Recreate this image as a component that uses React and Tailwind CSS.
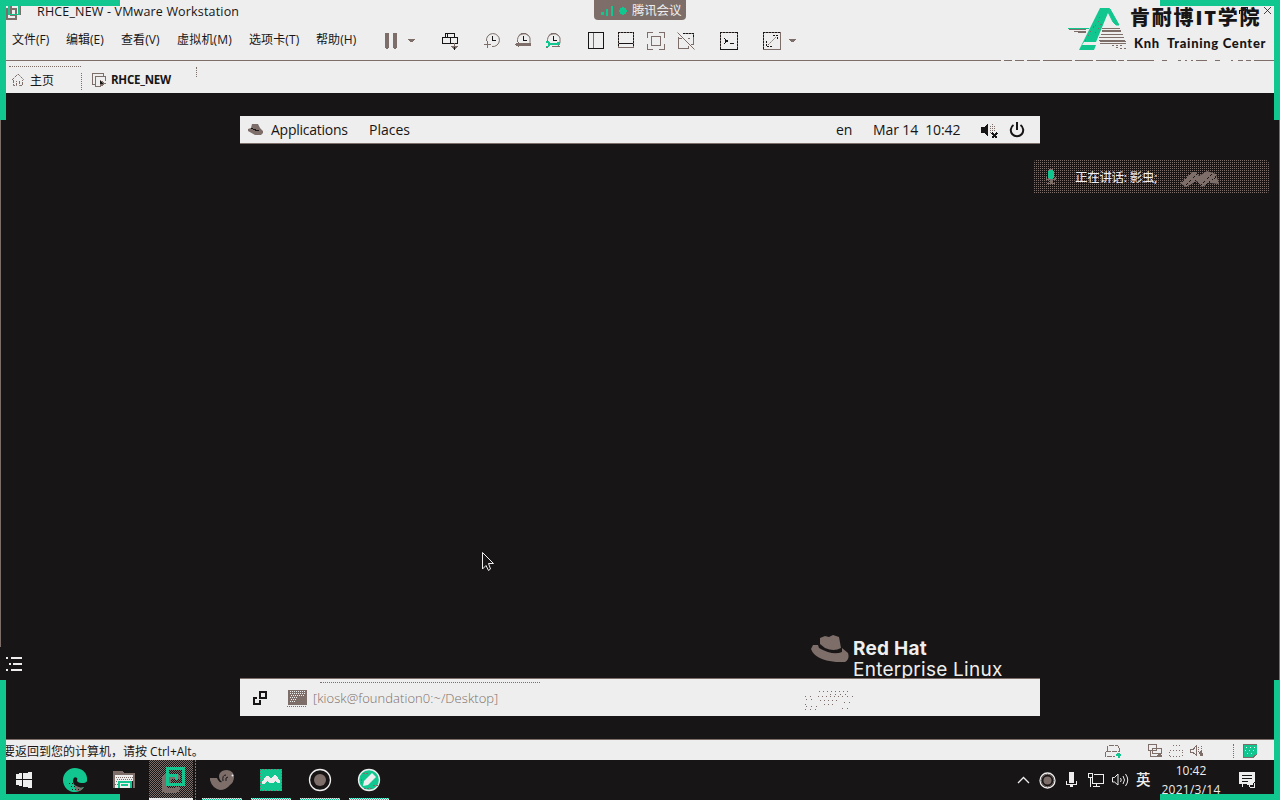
import React from 'react';

const INK = '#171515';
const TAUPE = '#7d6e6a';
const GREEN = '#11c78f';
const PAPER = '#eeeeee';

function Pic({ w, h, className = '', children }) {
  return (
    <svg
      width={w}
      height={h}
      viewBox={`0 0 ${w} ${h}`}
      fill="none"
      shapeRendering="crispEdges"
      className={`block shrink-0 ${className}`}
    >
      {children}
    </svg>
  );
}

function Clock({ children }) {
  return (
    <Pic w={17} h={18} className="mt-2">
      <g shapeRendering="auto">
        <path d="M2.500 10V7.500A6.500 6.500 0 0 1 15 6v4.500A7 7 0 0 1 13 14" stroke={TAUPE} />
        <path d="M4 3.500L6 1.500H11L13.500 4" stroke={TAUPE} />
      </g>
      <path d="M8.500 4V8.500H12" stroke={INK} />
      {children}
    </Pic>
  );
}

function Caret() {
  return (
    <Pic w={7} h={4} className="mt-[15px]">
      <path d="M0 0H7V1H6V2H5V3H2V2H1V1H0Z" fill={TAUPE} />
    </Pic>
  );
}

function MenuBar() {
  return (
    <div className="flex h-9 shrink-0 items-start pl-1.5 text-[12px] leading-8">
      <div className="w-1.5" />
      <span className="w-[54px] whitespace-nowrap">文件(F)</span>
      <span className="w-[55px] whitespace-nowrap">编辑(E)</span>
      <span className="w-[56px] tracking-[0.100px] whitespace-nowrap">查看(V)</span>
      <span className="w-[72px] tracking-[0.200px] whitespace-nowrap">虚拟机(M)</span>
      <span className="w-[67px] tracking-[0.100px] whitespace-nowrap">选项卡(T)</span>
      <span className="w-[69px] tracking-[0.100px] whitespace-nowrap">帮助(H)</span>
      <div className="flex w-[57px] gap-[11px]">
        <Pic w={12} h={16} className="mt-[9px]">
          <path d="M0 0H4V15H3V16H1V15H0ZM8 0H12V15H11V16H9V15H8Z" fill={TAUPE} />
        </Pic>
        <Caret />
      </div>
      <div className="w-[42px]">
        <Pic w={18} h={19} className="mt-2">
          <path d="M3.500 5V1.500H12.500V5M.5 5.500H8.500V11.500H.5ZM8.500 5.500H15.500V11.500H8.500M5.500 5V2M10 5.500H3" stroke={INK} />
          <path d="M12.500 11V17M9 14.500H16M10 15.500H15M11 16.500H14" stroke={TAUPE} />
          <path d="M12 15H13V18H12Z" fill={INK} />
        </Pic>
      </div>
      <div className="w-[31px]">
        <Pic w={17} h={18} className="mt-2">
          <g shapeRendering="auto">
            <path d="M2.500 9A6.500 6.500 0 1 1 8 14.500" stroke={TAUPE} />
          </g>
          <path d="M8.500 4V8.500H12" stroke={INK} />
          <path d="M0 12.500H7M3.500 9V16" stroke={TAUPE} />
        </Pic>
      </div>
      <div className="w-[30px]">
        <Clock>
          <path d="M0 12H1V11H3V10H4V11H16V14H4V15H3V14H1V13H0Z" fill={TAUPE} />
        </Clock>
      </div>
      <div className="w-[43px]">
        <Clock>
          <path d="M1 9H4V10H5V11H12V10H15V13H5V14H4V15H1V14H3V11H1Z" fill={GREEN} />
          <path d="M7 14.500H15M1 15.500H3" stroke={TAUPE} />
        </Clock>
      </div>
      <div className="w-[30px]">
        <Pic w={17} h={17} className="mt-2">
          <path d="M.5 .5H15.500V16.500H.5Z" stroke={INK} />
          <path d="M5.500 1V16" stroke={TAUPE} />
        </Pic>
      </div>
      <div className="w-[29px]">
        <Pic w={17} h={17} className="mt-2">
          <path d="M.5 .5H15.500V15.500H.5Z" stroke={TAUPE} />
          <path d="M0 .5H16M.5 0V15M15.500 0V15" stroke={INK} strokeDasharray="2 1" />
          <path d="M1 11.500H15" stroke={INK} />
        </Pic>
      </div>
      <div className="w-[30px]">
        <Pic w={18} h={18} className="mt-2">
          <path d="M.5 6V.5H6M12 .5H17.500V6M17.500 12V17.500H12M6 17.500H.5V12M4.500 4.500H13.500V13.500H4.500Z" stroke={TAUPE} />
        </Pic>
      </div>
      <div className="w-[43px]">
        <Pic w={18} h={18} className="mt-2">
          <path d="M6 1.500H16.500V12.500H14M1.500 5V16.500H11.500M1.500 6.500H5M11.500 14V16M11 6.500H13" stroke={TAUPE} />
          <path d="M6 1.500H16.500V6" stroke={INK} strokeDasharray="2 1" />
          <path d="M.5 .5L17.500 17.500" stroke={TAUPE} shapeRendering="auto" />
        </Pic>
      </div>
      <div className="w-[43px]">
        <Pic w={18} h={18} className="mt-2">
          <path d="M.5 .5H17.500V17.500H.5Z" stroke={TAUPE} />
          <path d="M0 .5H18M.5 0V18M17.500 0V18" stroke={INK} strokeDasharray="2 1" />
          <path d="M10 11.500H14M0 17.500H18" stroke={INK} />
          <path d="M4 6H5V7H6V8H8V10H6V11H5V12H4V11H5V7H4Z" fill={INK} />
        </Pic>
      </div>
      <div className="flex gap-2">
        <Pic w={18} h={18} className="mt-2">
          <path d="M.5 .5H17.500V17.500H.5Z" stroke={TAUPE} />
          <path d="M0 .5H18M.5 0V18" stroke={INK} strokeDasharray="2 1" />
          <path d="M10 3.500H14.500V8M3.500 9V14.500H9" stroke={INK} strokeDasharray="2 1" />
          <path d="M5 13L13 5" stroke={TAUPE} strokeDasharray="2 1" shapeRendering="auto" />
        </Pic>
        <Caret />
      </div>
    </div>
  );
}

function SchoolLogo() {
  return (
    <div className="absolute top-1.5 left-[1068px] flex">
      <Pic w={60} h={46}>
        <path d="M11 44L32 2H42L28 36H16L14 39H28L26 44Z" fill={GREEN} shapeRendering="auto" />
        <path d="M42 3L51 19H48L45 16L40 6Z" fill={GREEN} stroke={GREEN} strokeLinejoin="round" shapeRendering="auto" />
        <path d="M31 12L35 8M27 20L32 13M20 30L27 19M27 27L34 17M17 35L24 28" stroke={TAUPE} strokeDasharray="1 4" />
        <path d="M0 22.500H21" stroke={GREEN} />
        <path d="M1 23.500H18M6 25.500H18M10 26.500H18" stroke={TAUPE} />
        <path d="M34 22.500H52M34 24.500H53M34 25.500H53M33 28.500H55M31 31.500H56M31 34.500H57M32 35.500H58M32 37.500H58" stroke={TAUPE} />
        <path d="M44 39.500H54M48 41.500H52M52 42.500H58" stroke={TAUPE} strokeDasharray="2 2" />
      </Pic>
      <div className="ml-0.5 whitespace-nowrap">
        <div className="h-[26px] text-[20px] leading-[24px] font-black tracking-[1.800px]">肯耐博IT学院</div>
        <div className="ml-1 h-[20px] font-['Lato','Liberation_Sans',sans-serif] text-[13px] leading-[22px] font-black tracking-[0.680px]">Knh&nbsp; Training Center</div>
      </div>
    </div>
  );
}

function Header() {
  return (
    <header className="relative mr-1.5 flex h-[93px] shrink-0 flex-col bg-[#eeeeee]">
      <div className="flex h-6 shrink-0">
        <div className="w-[37px] pt-1 pl-[5px]">
          <Pic w={17} h={17}>
            <path d="M2 5H11V15H2ZM6 2V11H10" stroke={TAUPE} strokeWidth="2" />
            <path d="M4 2V10.500H14V2" stroke={GREEN} strokeWidth="1.500" />
            <path d="M15.500 2V11" stroke={TAUPE} />
          </Pic>
        </div>
        <span className="w-[557px] text-[12.500px] leading-6 tracking-[0.170px] whitespace-nowrap">RHCE_NEW - VMware Workstation</span>
        <div className="flex h-5 w-[92px] rounded-b bg-[#7d6e6a] pl-1.5 text-[#eeeeee]">
          <Pic w={14} h={12} className="mt-[5px]">
            <path d="M1 7H4V10H1ZM6 4H8V11H6ZM11 1H13V11H11Z" fill={GREEN} />
          </Pic>
          <Pic w={10} h={10} className="mt-1.5 ml-1">
            <path d="M2 2H8V8H2ZM4 1H6V9H4ZM1 4H9V6H1Z" fill={GREEN} />
          </Pic>
          <span className="ml-1 text-[12.500px] leading-[21px] tracking-[-0.200px] whitespace-nowrap">腾讯会议</span>
        </div>
      </div>
      <MenuBar />
      <div className="flex h-px shrink-0">
        <div className="w-[1001px] bg-[#7d6e6a]" />
        <Pic w={273} h={1}>
          <path
            d="M3 .5H11M14 .5H23M26 .5H39M42 .5H71M74 .5H92M95 .5H115M117 .5H123M126 .5H153M161 .5H166M177 .5H180M184 .5H186M190 .5H192M195 .5H206M214 .5H219M230 .5H232M237 .5H242M245 .5H250M253 .5H273"
            stroke={TAUPE}
          />
        </Pic>
      </div>
      <div className="flex h-8">
        <div className="mt-[5px] ml-[9px] flex h-[27px] w-[72px] border-t border-dotted border-[#7d6e6a] pl-[3px]">
          <Pic w={12} h={14} className="mt-[6px]">
            <path d="M0 7L6 1L12 7M1.500 7V12.500H4.500V8M7.500 8V12.500H10.500V7" stroke={TAUPE} strokeDasharray="3 1" shapeRendering="auto" />
          </Pic>
          <span className="ml-[6px] text-[12px] leading-[27px] whitespace-nowrap">主页</span>
        </div>
        <div className="mt-3 h-[17px] border-l border-dotted border-[#7d6e6a]" />
        <Pic w={15} h={15} className="mt-3 ml-[10px]">
          <path d="M3 11.500H.5V.5H11.500V3M8 13.500H3.500V3.500H13.500V8" stroke={TAUPE} />
          <path d="M8 7L14 10.500L8 14Z" fill={TAUPE} />
          <path d="M8 8L11 10.500L8 11Z" fill={INK} />
        </Pic>
        <span className="ml-1 w-[85px] text-[11.500px] leading-[38px] font-bold tracking-[-0.250px] whitespace-nowrap">RHCE_NEW</span>
        <div className="mt-1.5 h-[10px] border-l border-dotted border-[#7d6e6a]" />
      </div>
      <SchoolLogo />
      <Pic w={10} h={8} className="absolute top-1.5 left-[1239px]">
        <path d="M0 7.500V4.500H5M2 5V1.500H8V7" stroke={INK} />
      </Pic>
      <Pic w={9} h={9} className="absolute top-1.5 left-[1263px]">
        <path d="M1 1L8 8M8 1L1 8" stroke={INK} strokeWidth="0.800" shapeRendering="auto" />
      </Pic>
    </header>
  );
}

function GuestDesktop() {
  return (
    <div className="mx-auto mt-[23px] flex h-[600px] w-[800px] flex-col">
      <div className="flex h-7 shrink-0 items-start border-b border-[#7d6e6a] bg-[#eeeeee] font-['Open_Sans','Noto_Sans',sans-serif] text-[14px] leading-7">
        <Pic w={16} h={12} className="mt-[8px] ml-2">
          <path d="M4 0H10L12 4L15 7V9L13 11H7L0 7V5L3 4Z" fill={TAUPE} shapeRendering="auto" />
          <path d="M3 4.500H5M5 5.500H8M7 6.500H11" stroke={INK} />
        </Pic>
        <span className="ml-[7px] w-[98px] tracking-[-0.250px]">Applications</span>
        <span className="w-[467px]">Places</span>
        <span className="w-[37px]">en</span>
        <span className="w-[107px] tracking-[-0.100px] whitespace-pre">Mar 14  10:42</span>
        <Pic w={18} h={16} className="mt-1.5">
          <path d="M1 5H4L8 1V15L4 11H1Z" fill={INK} />
          <path d="M10.500 4V12M12.500 2V11M14.500 4V10" stroke={TAUPE} strokeDasharray="1 1" />
          <path d="M12 11L17 16M17 11L12 16" stroke={INK} strokeWidth="2" />
        </Pic>
        <Pic w={16} h={16} className="mt-1.5 ml-[11px]">
          <g shapeRendering="auto">
            <path d="M4.500 3A6.200 6.200 0 1 0 11.500 3M8 0V8" stroke={INK} strokeWidth="2" />
          </g>
        </Pic>
      </div>
      <div className="flex-1" />
      <div className="flex h-[44px] shrink-0 items-start overflow-hidden pl-[571px] font-['Inter','Open_Sans',sans-serif] text-[#eeeeee]">
        <Pic w={38} h={29}>
          <g shapeRendering="auto">
            <path d="M9 4L14 2L18 3L22 1L28 3L30 14Q23 18 14 14L9 10Z" fill={TAUPE} />
            <path d="M7 11L2 11L0 15Q4 26 25 28H34Q39 25 37 19L31 14V18Q22 22 8 14Z" fill={TAUPE} />
          </g>
        </Pic>
        <div className="mt-1 ml-1 whitespace-nowrap">
          <div className="h-[22px] text-[19px] leading-[22px] font-bold tracking-[0.250px]">Red Hat</div>
          <div className="h-[22px] text-[19px] leading-[20px] tracking-[0.250px]">Enterprise Linux</div>
        </div>
      </div>
      <div className="flex h-[38px] shrink-0 border-t border-[#7d6e6a] bg-[#eeeeee]">
        <Pic w={15} h={14} className="mt-3 ml-[13px]">
          <path d="M7 1H13V7H7ZM1 10V7H4M4 12.500H1V7M7 9V13H3" stroke={INK} strokeWidth="2" />
        </Pic>
        <div className="mt-[3px] ml-[15px] flex w-[257px] pl-1">
          <Pic w={20} h={19} className="mt-[7px]">
            <path d="M1 1H20V16H1Z" fill={TAUPE} />
            <path d="M3 2.500H18M3 4.500H18M4 6.500H17M3 8.500H10M4 10.500H9M3 12.500H8" stroke={PAPER} strokeDasharray="1 1" />
            <path d="M0 17.500H19" stroke={TAUPE} strokeDasharray="1 1" />
          </Pic>
          <div className="relative ml-[13px] w-[220px] border-t border-dotted border-[#7d6e6a]">
            <div className="-ml-[7px] font-['Open_Sans','Noto_Sans',sans-serif] text-[13px] leading-[30px] font-light tracking-[0.050px] whitespace-nowrap text-[#7d6e6a]">[kiosk@foundation0:~/Desktop]</div>
          </div>
        </div>
        <Pic w={50} h={22} className="mt-3 ml-[264px]">
          <path d="M15 .5H47M14 5.500H40M16 9.500H34M20 13.500H30" stroke={TAUPE} strokeDasharray="1 3" />
          <path d="M1 5.500H8M2 8.500H12M26 3.500H44M38 5.500H50M40 11.500H48M1 13.500H4M2 15.500H14M1 18.500H13M38 17.500H48" stroke={TAUPE} strokeDasharray="1 4" />
        </Pic>
      </div>
    </div>
  );
}

function StatusBar() {
  return (
    <div className="mr-1.5 flex h-[21px] shrink-0 border-t border-[#7d6e6a] bg-[#eeeeee]">
      <span className="ml-[3px] w-[1101px] text-[12px] leading-[23px] whitespace-nowrap">要返回到您的计算机，请按 Ctrl+Alt。</span>
      <Pic w={17} h={15} className="mt-1 ml-px">
        <path d="M2.500 7V3L4 1.500H12.500L14.500 4V7M1 7.500H15M.5 8V12.500H10" stroke={TAUPE} strokeDasharray="5 1" />
        <path d="M12 9H15V10H16V12H15V14H13V12H11V10H12Z" fill={GREEN} />
      </Pic>
      <Pic w={16} h={15} className="mt-1 ml-[26px]">
        <path d="M.5 .5H8.500V6.500H.5ZM4.500 4.500H13.500V9.500H4.500ZM2.500 6V12.500H9" stroke={TAUPE} />
        <path d="M10 9H13V11H14V13H9V11H10Z" fill={TAUPE} />
      </Pic>
      <Pic w={15} h={13} className="mt-[5px] ml-[5px]">
        <path d="M4 .5H11M1 5.500H14M.5 7V12M13.500 7V12M1 11.500H13" stroke={TAUPE} strokeDasharray="1 2" />
      </Pic>
      <Pic w={15} h={14} className="mt-1 ml-[6px]">
        <path d="M.5 5.500H3L6.500 1.500V11.500L3 8.500H.5Z" stroke={TAUPE} />
        <path d="M8.500 3V9M11.500 2V8" stroke={TAUPE} strokeDasharray="1 1" />
        <path d="M10 7H12V9H13V12H10V10H9V8H10Z" fill={TAUPE} />
      </Pic>
      <div className="mt-1 ml-[28px] h-[14px] border-l border-dotted border-[#7d6e6a]" />
      <Pic w={15} h={14} className="mt-1 ml-[9px]">
        <path d="M0 0H14V10L10 13H0Z" fill={GREEN} />
        <path d="M0 .5H14M.5 0V13M0 13.500H10L14 10" stroke={TAUPE} />
        <path d="M3 3.500H12M2 6.500H12M4 9.500H11" stroke={PAPER} strokeDasharray="1 3" />
      </Pic>
    </div>
  );
}

function AppButton({ className = '', children }) {
  return (
    <div className={`flex h-10 w-10 shrink-0 flex-col items-center justify-between pt-2 ${className}`}>
      {children}
      <div className="h-0.5 w-10 bg-[conic-gradient(#11c78f_25%,#eeeeee_0_50%,#11c78f_0_75%,#eeeeee_0)] bg-size-[2px_2px]" />
    </div>
  );
}

function Taskbar() {
  return (
    <footer className="flex h-10 shrink-0 text-[#eeeeee]">
      <Pic w={17} h={17} className="mt-[12px] ml-4">
        <path d="M0 2L6 1V7H0ZM7 1L16 0V7H7ZM0 8H6V14L0 13ZM7 8H16V16L7 15Z" fill={PAPER} />
      </Pic>
      <Pic w={24} h={24} className="mt-2 ml-[30px]">
        <g shapeRendering="auto">
          <path d="M24 13C25 5 19 0 12 0C5 0 0 6 0 12C0 19 6 25 13 24C16 24 20 21 21 19C16 21 10 18 10 13C10 10 12 8 14 10C15 11 13 13 15 14C18 16 24 15 24 13Z" fill={GREEN} />
          <path d="M11 17L18 20L21 19L17 23L13 23Z" fill={TAUPE} />
        </g>
        <path d="M6 15.500H10M8 18.500H12M9 21.500H16" stroke={INK} strokeDasharray="1 2" />
      </Pic>
      <Pic w={22} h={19} className="mt-[11px] ml-[26px]">
        <path d="M0 0H9L11 2H22V17H20V10H2V17H0Z" fill={TAUPE} />
        <path d="M2 4H20V10H18V17H2Z" fill={PAPER} />
        <path d="M3 6.500H20M4 8.500H19M3 10.500H18M2 13.500H5" stroke={TAUPE} strokeDasharray="1 1" />
        <path d="M5.500 17V10.500H17.500V17M8 13.500H15" stroke={GREEN} strokeWidth="2" />
      </Pic>
      <div className="ml-[14px] flex h-10 w-11 flex-col items-center justify-between bg-[conic-gradient(#7d6e6a_25%,#171515_0_50%,#7d6e6a_0_75%,#171515_0)] bg-size-[2px_2px] pt-[7px]">
        <Pic w={26} h={27} className="ml-1">
          <path d="M4 9H17V12M4 9V23H17V20M8 12V18" stroke={TAUPE} strokeWidth="5" strokeLinejoin="round" />
          <path d="M7 8V17H23V1.500H7V8M7 8.500H16V13" stroke={GREEN} strokeWidth="3" />
        </Pic>
        <div className="h-0.5 w-11 bg-[#eeeeee]" />
      </div>
      <div className="ml-0.5 h-10 w-px bg-[conic-gradient(#7d6e6a_50%,transparent_0)] bg-size-[1px_3px]" />
      <AppButton className="ml-[6px]">
        <Pic w={24} h={24}>
          <g shapeRendering="auto">
            <path d="M0 10H7Q9 15 12 14L10 12Q8 8 10 5Q12 2 17 2Q24 3 24 9Q24 14 20 17Q16 22 10 22Q2 20 0 12Z" fill={TAUPE} />
            <path d="M13 13Q12 7 16 7M18 9Q15 9 16 13" stroke={INK} />
            <circle cx="22.500" cy="7.500" r="1" fill={PAPER} />
          </g>
        </Pic>
      </AppButton>
      <AppButton className="ml-[9px]">
        <Pic w={22} h={24}>
          <path d="M0 1H22V23H0Z" fill={GREEN} />
          <path d="M.5 2V22M1 22.500H21M21.500 2V22M1 1.500H21" stroke={TAUPE} strokeDasharray="1 2" />
          <path d="M2 15V13H3L6 8H8L11 11L14 7H16L20 13V15H17L15 13L13 15H10L7 13L5 16H2Z" fill={PAPER} />
        </Pic>
      </AppButton>
      <AppButton className="ml-[9px]">
        <Pic w={24} h={24}>
          <g shapeRendering="auto">
            <circle cx="12" cy="12" r="10.500" stroke={PAPER} strokeWidth="1.300" />
            <circle cx="12" cy="12" r="6" fill={TAUPE} />
          </g>
        </Pic>
      </AppButton>
      <AppButton className="ml-[9px]">
        <Pic w={24} h={24}>
          <g shapeRendering="auto">
            <circle cx="12" cy="12" r="10.500" fill={GREEN} stroke={PAPER} strokeWidth="1.300" />
            <path d="M6 18L7 13L15 5L19 9L11 17Z" fill={PAPER} />
          </g>
          <path d="M6 5H12M16 17H21M4 11V15M7 20H15" stroke={TAUPE} strokeDasharray="2 1" />
        </Pic>
      </AppButton>
      <div className="flex-1" />
      <div className="flex w-[263px] shrink-0">
        <Pic w={13} h={8} className="mt-4">
          <path d="M1 7L6.500 1.500L12 7" stroke={PAPER} strokeWidth="1.300" shapeRendering="auto" />
        </Pic>
        <Pic w={17} h={17} className="mt-[12px] ml-[9px]">
          <g shapeRendering="auto">
            <circle cx="8.500" cy="8.500" r="7.500" stroke={PAPER} strokeWidth="1.300" />
            <circle cx="8.500" cy="8.500" r="6.200" stroke={TAUPE} />
            <circle cx="8.500" cy="8.500" r="4" fill={TAUPE} />
          </g>
        </Pic>
        <Pic w={11} h={16} className="mt-[12px] ml-[10px]">
          <path d="M3 0H8V11H3ZM0 9H1V12H10V9H11V13H7V15H4V13H0Z" fill={PAPER} />
        </Pic>
        <Pic w={17} h={15} className="mt-[13px] ml-[11px]">
          <path d="M6 1.500H15.500V10.500H4.500V5M.5 .5H4.500V4.500H.5ZM2.500 4V13.500M8.500 11V13.500M5 13.500H12" stroke={PAPER} />
        </Pic>
        <Pic w={17} h={14} className="mt-[13px] ml-[7px]">
          <g shapeRendering="auto">
            <path d="M.5 4.500H2.500L6 1V12L2.500 9H.5ZM8.500 5Q10 7 8.500 9M11 3Q14 7 11 11M13.500 1Q18 7 13.500 13" stroke={PAPER} />
          </g>
        </Pic>
        <span className="ml-[7px] w-[15px] text-[14.500px] leading-10 font-medium">英</span>
        <div className="ml-[8px] flex w-[64px] flex-col items-center pt-px text-[12px] leading-[19px] whitespace-nowrap">
          <span>10:42</span>
          <span className="tracking-[0.250px]">2021/3/14</span>
        </div>
        <Pic w={17} h={17} className="mt-[12px] ml-4">
          <path d="M0 0H16V10H14V13H8V12H4V15H3V12H0Z" fill={PAPER} />
          <path d="M3 3.500H13M3 6.500H13M3 9.500H9" stroke={INK} />
          <path d="M10.500 12Q13 9 15 11V15H11Z" stroke={PAPER} />
        </Pic>
      </div>
    </footer>
  );
}

function SpeakerToast() {
  return (
    <div className="absolute top-[160px] left-[1033px] flex h-[34px] w-[236px] items-center rounded bg-[conic-gradient(#7d6e6a_25%,#171515_0)] bg-size-[2px_2px] text-[12.500px] text-[#eeeeee]">
      <Pic w={12} h={16} className="ml-3">
        <path d="M3 2H4V1H8V2H9V9H8V10H4V9H3Z" fill={GREEN} />
        <path d="M4 .5H8M1.500 8V10.500H10.500V8M6 11V14M2 14.500H10M4 12H8" stroke={TAUPE} />
      </Pic>
      <span className="mt-0.5 ml-[18px] w-[105px] tracking-[-0.300px] whitespace-nowrap">正在讲话: 影虫;</span>
      <Pic w={40} h={20} className="mt-1">
        <path d="M0 14L12 3H16L19 7L27 2L36 5L39 15L30 14L22 18L17 12L6 18Z" fill={TAUPE} shapeRendering="auto" />
        <path d="M2 13L13 2M6 16L18 4M12 17L18 9M20 17L34 3M26 16L38 6" stroke={INK} strokeDasharray="1 1" />
      </Pic>
    </div>
  );
}

export default function App() {
  return (
    <div className="relative flex h-[800px] w-[1280px] flex-col overflow-hidden bg-[#171515] font-['Open_Sans','Noto_Sans_CJK_SC',sans-serif] text-[#171515]">
      <Header />
      <main className="min-h-0 flex-1">
        <GuestDesktop />
      </main>
      <StatusBar />
      <Taskbar />

      <SpeakerToast />
      <Pic w={16} h={14} className="absolute top-[657px] left-1.5">
        <path d="M0 1H2M5 1H16M3 7H5M7 7H16M0 13H2M5 13H16" stroke={PAPER} strokeWidth="2" />
      </Pic>
      <Pic w={14} h={21} className="absolute top-[551px] left-[481px]">
        <path d="M1.500 1.500V18L5 14.500L7.500 19.500L9.500 18L7.500 12.500H12.500Z" fill={INK} stroke={PAPER} shapeRendering="auto" />
      </Pic>
      <div className="absolute top-[120px] left-0 h-[527px] w-px bg-[#7d6e6a]" />
      <div className="absolute top-[120px] right-0 h-[560px] w-px bg-[#7d6e6a]" />

      <div className="absolute top-0 left-0 h-[120px] w-[120px] border-t-[6px] border-l-[6px] border-[#11c78f]" />
      <div className="absolute top-0 right-0 h-[120px] w-[120px] border-t-[6px] border-r-[6px] border-[#11c78f]" />
      <div className="absolute bottom-0 left-0 h-[120px] w-[120px] border-b-[6px] border-l-[6px] border-[#11c78f]" />
      <div className="absolute right-0 bottom-0 h-[120px] w-[120px] border-r-[6px] border-b-[6px] border-[#11c78f]" />
    </div>
  );
}
